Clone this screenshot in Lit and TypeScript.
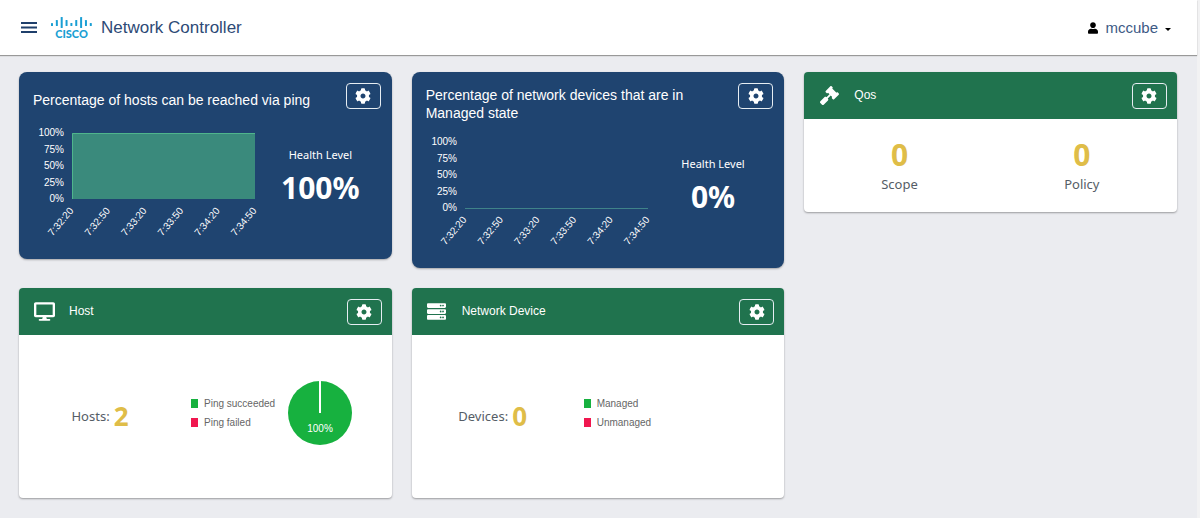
import { LitElement, html, svg, css } from "lit";
import { customElement, property } from "lit/decorators.js";

const COG =
  "M487.4 315.7l-42.6-24.6c4.3-23.2 4.3-47 0-70.2l42.6-24.6c4.9-2.8 7.1-8.6 5.5-14-11.1-35.6-30-67.8-54.7-94.6-3.8-4.1-10-5.1-14.8-2.3L380.8 110c-17.9-15.4-38.5-27.3-60.8-35.1V25.8c0-5.6-3.9-10.5-9.4-11.7-36.7-8.2-74.3-7.8-109.2 0-5.5 1.2-9.4 6.1-9.4 11.7V75c-22.2 7.9-42.8 19.8-60.8 35.1L88.7 85.5c-4.9-2.8-11-1.9-14.8 2.3-24.7 26.7-43.6 58.9-54.7 94.6-1.7 5.4.6 11.2 5.5 14L67.3 221c-4.3 23.2-4.3 47 0 70.2l-42.6 24.6c-4.9 2.8-7.1 8.6-5.5 14 11.1 35.6 30 67.8 54.7 94.6 3.8 4.1 10 5.1 14.8 2.3l42.6-24.6c17.9 15.4 38.5 27.3 60.8 35.1v49.2c0 5.6 3.9 10.5 9.4 11.7 36.7 8.2 74.3 7.8 109.2 0 5.5-1.2 9.4-6.1 9.4-11.7v-49.2c22.2-7.9 42.8-19.8 60.8-35.1l42.6 24.6c4.9 2.8 11 1.9 14.8-2.3 24.7-26.7 43.6-58.9 54.7-94.6 1.5-5.5-.7-11.3-5.6-14.1zM256 336c-44.1 0-80-35.9-80-80s35.9-80 80-80 80 35.9 80 80-35.9 80-80 80z";
const GAVEL =
  "M504.971 199.362l-22.627-22.627c-9.373-9.373-24.569-9.373-33.941 0l-5.657 5.657L329.608 69.255l5.657-5.657c9.373-9.373 9.373-24.569 0-33.941L312.638 7.029c-9.373-9.373-24.569-9.373-33.941 0L154.246 131.48c-9.373 9.373-9.373 24.569 0 33.941l22.627 22.627c9.373 9.373 24.569 9.373 33.941 0l5.657-5.657 39.598 39.598-81.04 81.04-5.657-5.657c-12.497-12.497-32.758-12.497-45.255 0L9.373 412.118c-12.497 12.497-12.497 32.758 0 45.255l45.255 45.255c12.497 12.497 32.758 12.497 45.255 0l114.745-114.745c12.497-12.497 12.497-32.758 0-45.255l-5.657-5.657 81.04-81.04 39.598 39.598-5.657 5.657c-9.373 9.373-9.373 24.569 0 33.941l22.627 22.627c9.373 9.373 24.569 9.373 33.941 0l124.451-124.451c9.372-9.372 9.372-24.568 0-33.941z";
const DESKTOP =
  "M528 0H48C21.5 0 0 21.5 0 48v320c0 26.5 21.5 48 48 48h192l-16 48h-72c-13.3 0-24 10.7-24 24s10.7 24 24 24h272c13.3 0 24-10.7 24-24s-10.7-24-24-24h-72l-16-48h192c26.5 0 48-21.5 48-48V48c0-26.5-21.5-48-48-48zm-16 352H64V64h448v288z";
const SERVER =
  "M480 160H32c-17.673 0-32-14.327-32-32V64c0-17.673 14.327-32 32-32h448c17.673 0 32 14.327 32 32v64c0 17.673-14.327 32-32 32zm-48-88c-13.255 0-24 10.745-24 24s10.745 24 24 24 24-10.745 24-24-10.745-24-24-24zm-64 0c-13.255 0-24 10.745-24 24s10.745 24 24 24 24-10.745 24-24-10.745-24-24-24zm112 248H32c-17.673 0-32-14.327-32-32v-64c0-17.673 14.327-32 32-32h448c17.673 0 32 14.327 32 32v64c0 17.673-14.327 32-32 32zm-48-88c-13.255 0-24 10.745-24 24s10.745 24 24 24 24-10.745 24-24-10.745-24-24-24zm-64 0c-13.255 0-24 10.745-24 24s10.745 24 24 24 24-10.745 24-24-10.745-24-24-24zm112 248H32c-17.673 0-32-14.327-32-32v-64c0-17.673 14.327-32 32-32h448c17.673 0 32 14.327 32 32v64c0 17.673-14.327 32-32 32zm-48-88c-13.255 0-24 10.745-24 24s10.745 24 24 24 24-10.745 24-24-10.745-24-24-24zm-64 0c-13.255 0-24 10.745-24 24s10.745 24 24 24 24-10.745 24-24-10.745-24-24-24z";
const USER =
  "M224 256c70.7 0 128-57.3 128-128S294.7 0 224 0 96 57.3 96 128s57.3 128 128 128zm89.6 32h-16.7c-22.2 10.2-46.9 16-72.9 16s-50.6-5.8-72.9-16h-16.7C60.2 288 0 348.2 0 422.4V464c0 26.5 21.5 48 48 48h352c26.5 0 48-21.5 48-48v-41.6c0-74.2-60.2-134.4-134.4-134.4z";

const ICONS: Record<string, { box: string; width: number; height: number; path: string }> = {
  gavel: { box: "0 0 512 512", width: 19, height: 19, path: GAVEL },
  desktop: { box: "0 0 576 512", width: 21, height: 19, path: DESKTOP },
  server: { box: "0 0 512 512", width: 19, height: 19, path: SERVER },
};

@customElement("settings-button")
class SettingsButton extends LitElement {
  static styles = css`
    :host {
      display: block;
      flex: none;
    }
    .button {
      display: grid;
      place-items: center;
      width: 35px;
      height: 26px;
      padding: 0;
      border: 1px solid #e6edf2;
      border-radius: 4px;
      background: none;
      color: #fff;
      cursor: pointer;
    }
    .glyph {
      display: block;
      fill: currentColor;
    }
  `;

  render() {
    return html`<button class="button" type="button" aria-label="Settings">
      <svg class="glyph" width="16" height="16" viewBox="0 0 512 512"><path d=${COG} /></svg>
    </button>`;
  }
}

@customElement("health-card")
class HealthCard extends LitElement {
  @property() heading = "";
  @property({ type: Number }) level = 0;

  static styles = css`
    :host {
      display: block;
      padding: 11px 11px 14px;
      border-radius: 8px;
      background: #1f4470;
      color: #fff;
      box-shadow: 0 1px 2px rgba(0, 0, 0, 0.3);
    }
    .head {
      display: flex;
      align-items: flex-start;
      gap: 8px;
    }
    .title {
      display: flex;
      flex: 1;
      align-items: center;
      min-height: 27px;
      margin: 3px 0 0 3px;
      font: 400 14px/18px "Liberation Sans", Arial, sans-serif;
    }
    .body {
      display: flex;
    }
    .chart {
      display: block;
      flex: none;
      fill: #fff;
      font: 400 10px "Liberation Sans", Arial, sans-serif;
    }
    .area {
      fill: #3a8a7c;
    }
    .line {
      fill: none;
      stroke: #4fb58c;
    }
    .flat {
      stroke: #3f8389;
    }
    .health {
      display: flex;
      flex: 1;
      flex-direction: column;
      align-items: center;
      padding-top: 32px;
    }
    .label {
      font: 400 11px/20px "Noto Sans", sans-serif;
    }
    .value {
      font: 700 30px/46px "Noto Sans", sans-serif;
    }
  `;

  render() {
    const left = 42;
    const right = 225;
    const top = 20;
    const bottom = 86;
    const y = bottom - ((bottom - top) * this.level) / 100;
    const times = ["7:32:20", "7:32:50", "7:33:20", "7:33:50", "7:34:20", "7:34:50"];
    const step = (right - left) / (times.length - 1);
    return html`
      <div class="head">
        <h2 class="title">${this.heading}</h2>
        <settings-button></settings-button>
      </div>
      <div class="body">
        <svg class="chart" width="230" height="132" viewBox="0 0 230 132" role="img" aria-label=${this.heading}>
          ${[100, 75, 50, 25, 0].map(
            (tick, i) => svg`<text x="34" y=${top + 3 + (i * (bottom - top)) / 4} text-anchor="end">${tick}%</text>`,
          )}
          <rect class="area" x=${left} y=${y} width=${right - left} height=${bottom - y}></rect>
          <path
            class=${this.level ? "line" : "line flat"}
            d=${this.level
              ? `M${left + 0.5} ${bottom}V${y + 0.5}H${right}`
              : `M${left} ${bottom + 0.5}H${right}`}
          />
          ${times.map((time, i) => {
            const x = left + 2 + i * step;
            return svg`<text x=${x} y="98" text-anchor="end" transform=${`rotate(-50 ${x} 98)`}>${time}</text>`;
          })}
        </svg>
        <div class="health">
          <span class="label">Health Level</span>
          <strong class="value">${this.level}%</strong>
        </div>
      </div>
    `;
  }
}

@customElement("info-card")
class InfoCard extends LitElement {
  @property() heading = "";
  @property() icon = "gavel";

  static styles = css`
    :host {
      display: block;
      overflow: hidden;
      border-radius: 4px;
      background: #fff;
      box-shadow: 0 1px 2px rgba(0, 0, 0, 0.35);
    }
    .head {
      display: flex;
      align-items: center;
      min-height: 47px;
      padding-right: 10px;
      background: #20734e;
      color: #fff;
    }
    .icon {
      display: grid;
      flex: none;
      place-items: center;
      width: 50px;
    }
    .glyph {
      display: block;
      fill: currentColor;
    }
    .title {
      flex: 1;
      margin: 0;
      padding-bottom: 2px;
      font: 400 12px/18px "Liberation Sans", Arial, sans-serif;
    }
  `;

  render() {
    const icon = ICONS[this.icon];
    return html`
      <header class="head">
        <span class="icon">
          <svg class="glyph" width=${icon.width} height=${icon.height} viewBox=${icon.box} aria-hidden="true">
            <path d=${icon.path} />
          </svg>
        </span>
        <h2 class="title">${this.heading}</h2>
        <settings-button></settings-button>
      </header>
      <slot></slot>
    `;
  }
}

@customElement("app-root")
class AppRoot extends LitElement {
  static styles = css`
    :host {
      display: block;
      box-sizing: border-box;
      min-height: 100vh;
      border-right: 3px solid #f2f2f3;
      background: #ebecf0;
    }
    .bar {
      display: flex;
      align-items: center;
      height: 55px;
      padding: 0 26px 0 21px;
      background: #fff;
      box-shadow: 0 1px 1px #999;
    }
    .plain {
      display: flex;
      align-items: center;
      padding: 0;
      border: 0;
      background: none;
      cursor: pointer;
    }
    .menu {
      color: #1f3f6b;
    }
    .logo {
      margin: 0 9px 0 13px;
      fill: #1a9fd4;
      font: 900 10px Lato, sans-serif;
    }
    .name {
      flex: 1;
      margin: 0;
      color: #2d4a76;
      font: 400 17px/24px "Liberation Sans", Arial, sans-serif;
    }
    .user {
      gap: 7px;
      color: #3d5a85;
      font: 400 15px/20px "Liberation Sans", Arial, sans-serif;
    }
    .dark {
      fill: #000;
    }
    .grid {
      display: grid;
      grid-template-columns: repeat(3, minmax(0, 1fr));
      align-items: start;
      gap: 20px;
      padding: 17px 20px 20px 19px;
    }
    .totals {
      display: grid;
      grid-template-columns: 1fr 1fr;
      padding: 17px 4px 18px;
      text-align: center;
    }
    .total {
      display: flex;
      flex-direction: column-reverse;
    }
    .caption {
      color: #555d66;
      font: 400 13px/20px "Noto Sans", sans-serif;
    }
    .number {
      margin: 0;
      color: #dfbd48;
      font: 700 30px/38px "Noto Sans", sans-serif;
    }
    .small {
      font-size: 26px;
    }
    .split {
      display: grid;
      grid-template-columns: 162px 97px 1fr;
      align-items: center;
      min-height: 163px;
    }
    .count {
      display: flex;
      align-items: center;
      justify-content: center;
      gap: 4px;
      padding-bottom: 2px;
    }
    .legend {
      display: grid;
      gap: 3px;
      margin: 0;
      padding: 0 0 7px 10px;
      list-style: none;
    }
    .key {
      display: flex;
      align-items: center;
      gap: 6px;
      color: #666;
      font: 400 10px/16px "Liberation Sans", Arial, sans-serif;
      white-space: nowrap;
    }
    .swatch {
      flex: none;
      width: 7px;
      height: 9px;
      background: #17b13f;
    }
    .bad {
      background: #f0174f;
    }
    .pie {
      display: block;
      margin: 0 0 8px 10px;
      font: 400 10px "Liberation Sans", Arial, sans-serif;
    }
  `;

  private logo() {
    const bars = [
      [6, 9],
      [3, 9],
      [0, 11],
      [3, 9],
      [6, 9],
      [3, 9],
      [0, 11],
      [3, 9],
      [6, 9],
    ];
    return html`<svg class="logo" width="41" height="22" viewBox="0 0 41 22" role="img" aria-label="Cisco">
      ${bars.map(
        ([from, to], i) => svg`<rect x=${i * 4.85} y=${from} width="2" height=${to - from} rx="0.6"></rect>`,
      )}
      <text x="20.5" y="21" text-anchor="middle" font-size="11">CISCO</text>
    </svg>`;
  }

  private breakdown(label: string, count: number, good: string, bad: string, pie: boolean) {
    return html`<div class="split">
      <div class="count">
        <span class="caption">${label}:</span>
        <strong class="number small">${count}</strong>
      </div>
      <ul class="legend">
        <li class="key"><span class="swatch"></span>${good}</li>
        <li class="key"><span class="swatch bad"></span>${bad}</li>
      </ul>
      ${pie
        ? html`<svg class="pie" width="64" height="64" viewBox="0 0 64 64" role="img" aria-label=${`${good} 100%`}>
            <circle cx="32" cy="32" r="32" fill="#17b13f"></circle>
            <path d="M32 0V32" stroke="#fff" stroke-width="2" />
            <text x="32" y="51" text-anchor="middle" fill="#fff">100%</text>
          </svg>`
        : null}
    </div>`;
  }

  render() {
    return html`
      <header class="bar">
        <button class="plain menu" type="button" aria-label="Menu">
          <svg width="17" height="11" viewBox="0 0 17 11">
            <path d="M0 0H16V2H0ZM0 4.5H16V6.5H0ZM0 9H16V11H0Z" fill="currentColor" />
          </svg>
        </button>
        ${this.logo()}
        <h1 class="name">Network Controller</h1>
        <button class="plain user" type="button">
          <svg class="dark" width="10" height="12" viewBox="0 0 448 512" aria-hidden="true"><path d=${USER} /></svg>
          <span>mccube</span>
          <svg class="dark" width="6" height="7" viewBox="0 0 6 7" aria-hidden="true"><path d="M0 4H6L3 7Z" /></svg>
        </button>
      </header>
      <main class="grid">
        <health-card heading="Percentage of hosts can be reached via ping" level="100"></health-card>
        <health-card heading="Percentage of network devices that are in Managed state" level="0"></health-card>
        <info-card heading="Qos" icon="gavel">
          <div class="totals">
            <div class="total"><span class="caption">Scope</span><strong class="number">0</strong></div>
            <div class="total"><span class="caption">Policy</span><strong class="number">0</strong></div>
          </div>
        </info-card>
        <info-card heading="Host" icon="desktop">
          ${this.breakdown("Hosts", 2, "Ping succeeded", "Ping failed", true)}
        </info-card>
        <info-card heading="Network Device" icon="server">
          ${this.breakdown("Devices", 0, "Managed", "Unmanaged", false)}
        </info-card>
      </main>
    `;
  }
}
